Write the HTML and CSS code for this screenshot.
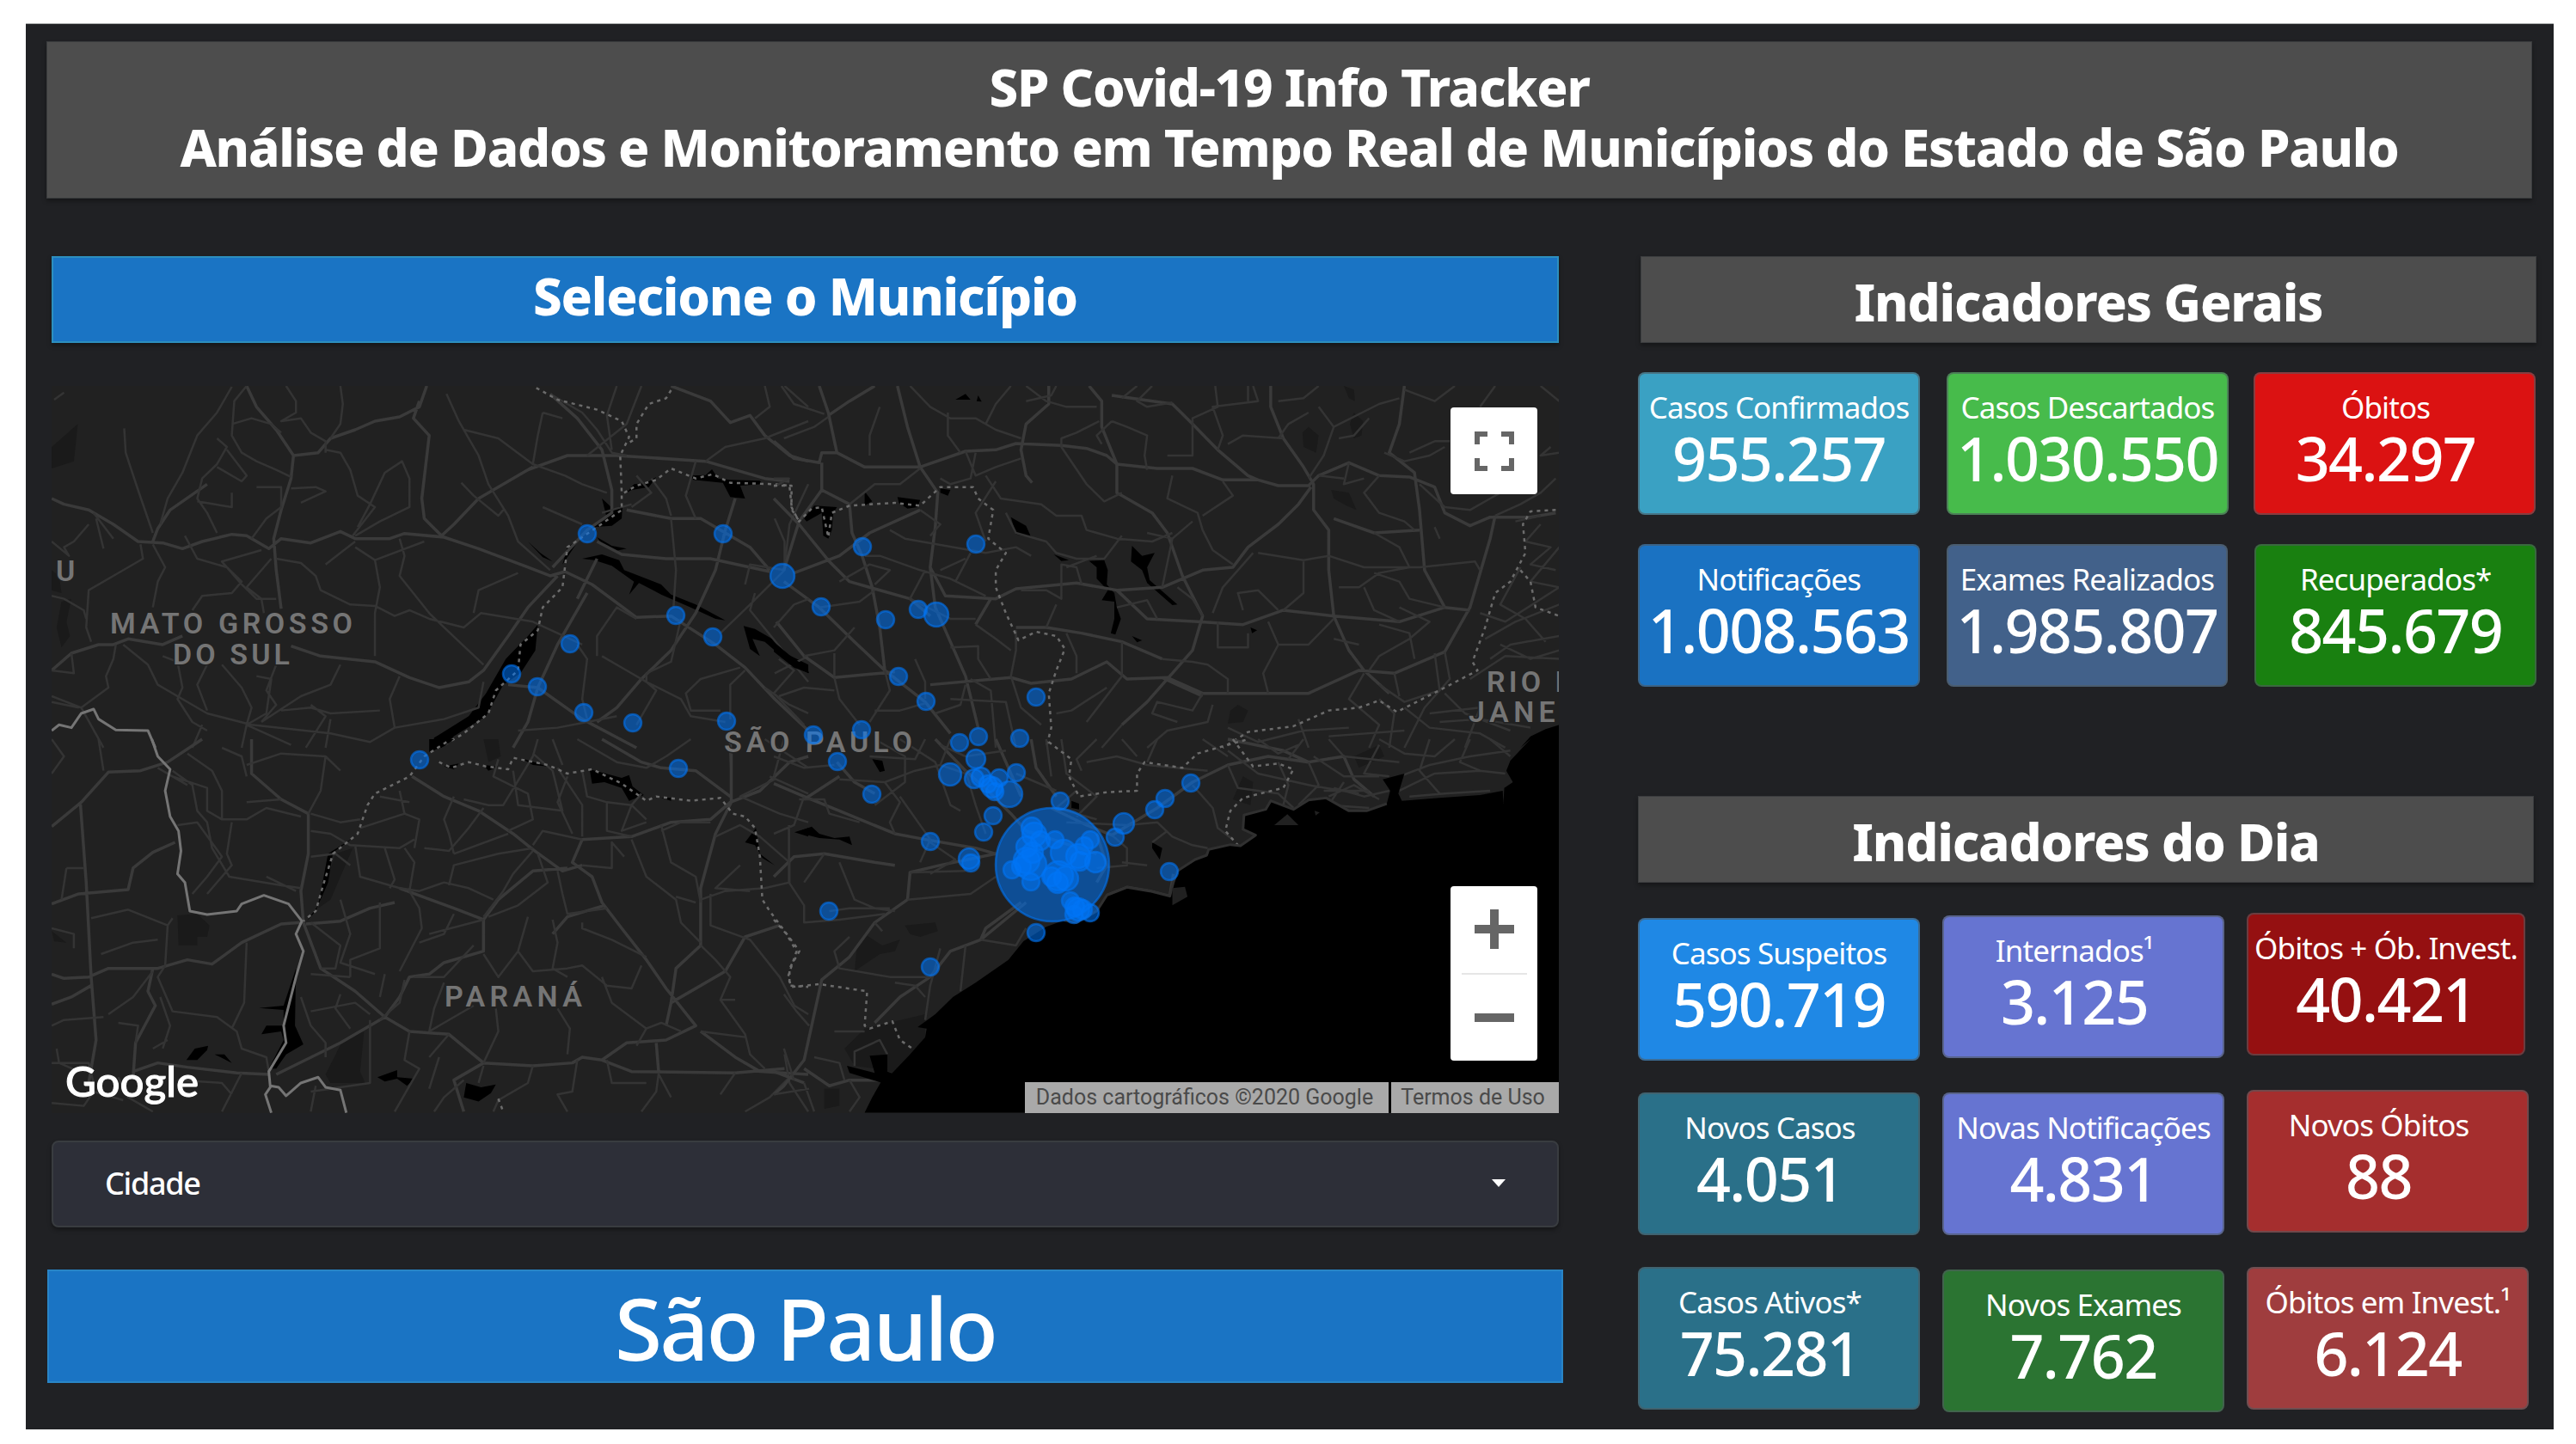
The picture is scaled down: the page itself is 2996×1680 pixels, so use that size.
FILE: index.html
```html
<!DOCTYPE html>
<html lang="pt-BR">
<head>
    <meta charset="UTF-8">
    <meta name="viewport" content="width=device-width, initial-scale=1.0">
    <title>SP Covid-19 Info Tracker</title>
    <link rel="stylesheet" href="styles.css">
</head>
<body>
    <div class="panel">
        <header class="header">
            <h1>SP Covid-19 Info Tracker<br><span class="subtitle">Análise de Dados e Monitoramento em Tempo Real de Municípios do Estado de São Paulo</span></h1>
        </header>
        <main class="content">
            <section class="left">
                <h2 class="bar bar-blue">Selecione o Município</h2>
                <div class="map">
                    <svg class="map-svg" viewBox="0 0 1753 846" preserveAspectRatio="none">
                        <!-- northwest tile -->
                        <g transform="translate(-20 -19) scale(.574 .3333)">
                            <path class="park" d="M88 190L80 320L35 345V270ZM75 800L65 880L72 930L55 970L45 900L55 810ZM35 700L50 720L55 780L35 770Z"/>
                            <path class="water" d="M1150 450L1175 490L1192 470L1190 520L1170 545L1130 550L1160 520ZM1200 430L1215 400L1240 395L1260 375L1245 410L1210 420ZM1330 370L1360 368L1373 348L1385 380L1410 385L1470 388L1475 400L1430 405L1440 450L1410 445L1395 395L1335 385ZM1140 585L1170 615L1200 625L1180 632L1150 610ZM1110 660L1150 645L1185 665L1195 700L1270 750L1290 785L1340 820L1400 875L1380 870L1330 830L1270 785L1225 745L1205 785L1215 740L1170 685L1135 665ZM1437 895L1460 905L1500 945L1510 980L1568 1030V1060L1530 1025L1480 950L1455 940L1470 1000L1450 975ZM1020 890L1015 980L985 1060L950 1100L915 1210L850 1280L825 1320H805L810 1285L880 1210L915 1130L955 1010L1000 930ZM1000 600L1025 640L1050 670L1030 655ZM1080 620L1105 590L1070 680Z"/>
                            <path class="road" d="M35 450L60 470L110 490L160 540L210 600L260 605L300 625L340 600L400 575L430 580L475 625L500 590L560 605L620 565L650 590L720 590L750 572L830 585L900 625L1000 690L1045 720L1075 705M240 600L250 555L275 490L350 400M430 57L450 130L490 210L525 300L520 380L500 490L485 590L490 700L500 835M525 300L575 290L600 240L650 210L690 180L740 165L780 130L795 57M35 1050L75 990L130 960L160 960L190 940L260 960L300 930M520 965L580 1000L690 1020L760 1075L820 1110L880 1090L910 1050L960 930L1000 830L1060 720M1045 85L1100 170L1150 280L1170 420L1170 500L1120 560L1050 690M1075 705L1130 750L1220 865L1290 860L1380 960L1440 1040L1500 1150L1568 1260M1200 490L1290 520L1350 520L1400 570L1450 620L1490 700M1140 600L1190 645L1280 660L1370 660L1490 705M1420 450L1400 560L1380 700L1340 850L1290 980L1230 1080L1180 1180L1140 1230M1290 57L1370 110L1410 185L1450 160L1480 230L1530 300L1568 320M1000 350L1080 300L1180 300L1360 320L1480 380L1530 390M1010 340L900 450L850 540L825 580L790 520L785 450L800 230L768 170L780 110M960 1100L1020 1110L1110 1220L1220 1320M1120 780L1060 960L1020 1110L1000 1230L970 1320M1140 660L1100 800"/>
                            <path class="road minor" d="M182 205L185 290L210 420L240 570M400 60L370 150L330 230L300 360L270 450L255 540M430 57L405 110L400 230L420 290L450 320L490 350L520 375M400 190L440 170L480 190L500 220M510 57L530 110L530 150L500 180L540 170L560 220L590 250L590 290M620 57L625 120L620 190L600 240M590 280L620 290L640 350L655 440L690 480L645 580M655 550L680 470L710 360L745 320L760 380L760 480L700 530L650 580M865 395L890 440L940 510L950 490M835 85L860 180L900 300L920 400L960 510L980 600L1045 700M870 210L940 240L1010 330M1030 150L1020 230L1010 330L1075 370L1110 400L1160 430M1030 480L1110 540M370 240L390 270L370 330L340 380L330 450L350 500L370 570M390 280L430 370L420 390L370 340M450 410L500 410L500 480L470 520L440 590M330 460L400 480L400 430M520 415L570 410L590 425L540 465M125 520L140 625M120 500L160 590M110 540L80 600L60 620L70 650L35 600M215 610L220 660L160 720L110 770L105 900L115 950M240 610L265 690L250 740L240 830M305 580L330 660L390 690L420 740L400 780L340 790L320 840M460 630L380 670L420 750L450 800L490 800M480 660L430 760L460 800L465 850M490 660L540 675L570 720L580 770L640 820L690 825L730 860L760 840L800 870L870 900L905 850L1010 880L1110 960M650 600L620 640L590 680M740 590L750 650L740 720L800 850L830 900L910 1030M650 620L690 665L700 760L690 850L690 1000M690 665L790 600M980 710L900 770L890 850M35 790L60 800L100 840L105 870M75 990L80 1060L35 1050M165 960L160 1010L145 1070L150 1110L95 1180L35 1140M180 960L230 1030L250 1100L320 1170L350 1200L440 1240M260 1000L290 1020L300 1110L290 1150L320 1230L350 1260M350 1030L330 1100L350 1190M380 1030L420 1110L440 1180L430 1240L420 1320M490 1030L470 1120L490 1170L460 1230M450 1070L480 1080L470 1200L430 1240L520 1310M460 1230L540 1140L600 1100L620 1030M440 1240L600 1270L680 1300L730 1250L720 1150L740 1070M730 1250L830 1220L900 1180L910 1090M560 1170L590 1210L550 1320M500 1190L560 1180L600 1200L700 1190M340 1240L320 1320M95 1180L140 1320M35 1160L90 1180M600 1220L590 1320M40 105L60 80M1050 90L1110 150L1140 210L1170 290L1200 300M1180 57L1160 160L1170 280M1030 150L1070 170M1210 470L1150 500M1290 520L1300 700L1295 830M1340 520L1320 440L1340 320M1250 380L1280 450L1290 510M1360 320L1400 270L1480 240L1568 180M1480 57L1490 130L1460 170M1520 57L1568 130M1500 520L1520 600L1520 700M1568 400L1530 540L1520 690M1220 370L1250 430L1210 480M1120 300L1200 190L1230 57M1440 750L1450 680L1520 700L1450 820L1390 920M1460 780L1450 840L1568 1090M1310 870L1290 1020L1240 1060L1240 1090L1310 1150L1330 1210L1400 1230M1430 1040L1350 1080L1320 1130L1330 1190L1390 1190M1440 1050L1410 1100L1410 1220M1100 960L1120 1010L1110 1150L1120 1220M1150 1000L1200 1050L1240 1090L1260 1120L1220 1240M1180 1210L1120 1230L1060 1250L980 1260M1220 870L1180 830L1140 930L1140 1000M1480 1110L1530 1170L1568 1200M1500 1060L1568 1000"/>
                            <path class="state" d="M1017 64L1060 105L1140 140L1190 180L1205 235L1187 300L1190 430L1190 490L1140 550L1080 620L1070 760L1030 830L1020 910L985 960L980 1050L935 1120L920 1200L870 1270L825 1315M1290 72L1280 100L1245 120L1220 190L1220 240L1200 260M1195 430L1220 405L1260 385L1290 345L1340 380L1375 365L1410 395L1500 400L1530 405L1535 490L1550 530"/>
                            <path class="country" d="M35 1260L50 1240L75 1250L95 1200L120 1185L130 1220L165 1258L230 1260L245 1320"/>
                        </g>
                        <!-- northeast tile -->
                        <g transform="translate(840 -19) scale(.5867 .3333)">
                            <path class="park" d="M1130 57L1150 70L1152 110L1140 100ZM1150 150L1168 180L1165 230L1150 240L1142 190ZM1060 200L1080 230L1075 290L1050 270L1048 220ZM1105 420L1140 430L1155 490L1135 475L1110 450ZM920 1170L940 1190L930 1230L900 1235L905 1190Z"/>
                            <path class="water" d="M360 105L380 85L390 105ZM405 90L412 112L402 110ZM180 425L195 460L180 475ZM245 445L290 455L285 480L265 485L248 465ZM330 415L350 420L345 440L330 430ZM60 520L80 475L125 480L118 500L115 560L108 590L98 580L95 500L65 530ZM470 515L500 545L510 585L480 575ZM555 645L585 665L570 668ZM625 668L655 665L662 700L660 750L675 780L680 830L688 870L677 925L668 920L675 870L675 810L650 805L662 770L640 730L640 690ZM710 615L730 650L755 640L740 690L745 735L800 820L790 822L740 745L730 700L708 670ZM0 950L40 1010L65 1035L70 1060L40 1040L0 985ZM710 930L730 945L720 952ZM945 900L958 910L948 920Z"/>
                            <path class="road" d="M0 250L40 310L90 325L95 290L125 290L180 340L290 340L380 285L440 280L480 258L570 265L620 275L660 300L680 330L760 345L830 345L890 385L960 385L1000 405L1060 405L1080 370L1140 325L1200 370L1260 375L1310 410L1330 500L1380 545L1420 515L1500 515L1550 500M90 57L108 150L125 290M200 57L150 110L108 160M245 57L265 200L290 340L325 430L320 550L310 690L320 830L350 950L380 1070L405 1250M95 325L95 420L150 470L155 570L175 650L195 760L210 900L220 1050M0 450L50 540L110 670L150 740L200 765L270 800L310 860M40 710L130 650L190 570L290 490M95 420L50 530L20 700M20 740L90 830L160 950L220 1050L300 1160L350 1270M5 880L60 1000L120 1075L240 1055M625 57L650 110L650 200L680 330L680 430L750 500L780 570L810 720L850 860L830 980L800 1040L740 1160L690 1240M670 90L790 120L830 190L880 280L940 370L960 385M985 57L985 130L1010 240L1050 340L1070 400L1070 490L1100 560L1100 700L1110 860L1140 980L1170 1050L1220 1130M1065 410L1040 470L1000 540L940 620L910 690L850 700L770 760L680 770L600 745L480 765L440 800L340 790L310 690M310 1100L470 1075L510 1095L590 1080L660 1020L700 1080L780 1075L850 1130L1060 1130L1160 1050L1230 1060L1330 985L1380 830L1420 590L1430 510M480 900L540 900L610 920L690 950L770 1010M770 1075L800 1100L850 1140M680 770L740 870L840 880L930 890L1010 840L1110 860L1240 880L1330 830L1380 840M1250 57L1240 190L1220 290L1270 360L1280 490L1290 700L1330 830M545 57L545 120L500 190L490 280L500 370L512 395M430 800L400 890M1110 520L1190 570L1280 560"/>
                            <path class="road minor" d="M15 57L40 120L100 155M20 240L80 200L108 165M210 130L190 230L190 300M270 57L310 130L350 170L400 170L440 210L490 240M470 57L440 120L420 190M345 150L345 230L370 290M500 57L540 110L580 130L640 130M500 110L550 90L560 57M645 180L600 220L570 240L570 270L620 400L655 460L690 430M670 180L700 200L740 230L735 300L740 350M670 180L640 230L650 260M720 57L690 100M750 57L720 110L740 130L790 115M875 57L880 130L830 170L830 300L780 300M950 57L960 110L870 130L890 230L880 280M1010 240L930 230L900 260M1000 110L1050 100L1080 57M1080 130L1110 200L1090 300L1060 380M1060 150L1020 190L1000 240M1250 70L1310 110L1350 57M1430 57L1400 130M1110 200L1200 120L1240 100M1120 240L1150 230L1180 170M1140 325L1130 400L1170 380M1080 370L1130 380M1200 370L1170 430L1200 500L1250 530L1270 560M1260 290L1310 250L1340 250M1210 290L1250 320L1300 300L1330 270M1280 400L1330 480L1380 490L1420 450L1440 430M1310 550L1320 590M1430 510L1480 470L1520 430L1550 380M1470 530L1520 510M0 410L30 380L0 380M150 470L200 400L250 400L290 345M330 380L350 400L390 380L400 290M290 490L330 540L310 580M230 560L260 590L420 640L480 620L510 650M460 500L480 570L540 600L560 640L600 660L655 660L690 580M420 370L450 450L530 470L560 510L610 510L620 560L680 590L750 600L790 570M380 285L400 370L440 340L490 310M440 390L400 500L420 600M490 770L540 770L570 800L570 680L600 690L610 750M680 830L740 805L760 870M540 900L560 820M400 890L440 940L470 980M350 970L405 965L405 1010L430 1080M180 650L210 650L290 700L350 730L420 790M130 740L190 680L230 700L200 750M390 640L360 740M380 660L330 700M90 830L170 810L200 770M160 900L120 980L60 1000M120 990L120 1070M0 900L40 820L70 800M300 700L270 800L350 870L400 870M10 1140L60 1110L120 1120M10 1010L40 1050L0 1130M120 1075L130 1150L170 1240M220 1050L230 1120L190 1230M280 1010L300 1090L300 1150M380 1100L370 1170L320 1200M350 1150L460 1160L480 1320M390 1080L430 1120L440 1320M0 1130L60 1240M200 1190L250 1190L300 1165M480 910L480 980L470 1070L490 1180L530 1240M580 920L600 1000L600 1060M690 950L690 1070L620 1230M660 1110L590 1190L560 1200M880 880L880 970L940 970L940 920M770 1010L830 1020L860 1030L900 1080L900 1130M850 860L830 800L800 760M770 760L790 590L740 570M830 530L790 590M850 510L910 440L890 390M790 370L780 450L840 500L850 560L870 630L910 680M960 640L1050 665L1100 650L1170 690L1280 690M1050 670L1050 780L1010 840M950 640L920 700L890 760L870 850M1190 570L1240 620L1260 690L1200 710L1160 760L1120 760M1280 690L1390 670L1400 700M1190 710L1240 740L1260 800L1330 830M1170 760L1190 840L1240 880M1240 830L1300 880L1260 940L1200 1000L1180 1050M1200 890L1260 920L1270 1010M1110 940L1160 960M1000 840L960 770L920 780L930 840M980 880L1000 960L1060 960L1110 870M1000 960L970 1060L980 1130M870 1170L860 1230L780 1260L740 1320M850 1130L830 1190L760 1160L750 1200L800 1230M690 1240L650 1320M1170 1060L1140 1150L1200 1240L1180 1320M1200 1100L1250 1160L1320 1120L1310 990M1230 1060L1240 1140M1330 985L1340 1080L1290 1180L1250 1320M1400 850L1450 880L1557 760M1410 940L1470 880L1500 860L1557 820M1440 960L1500 1010L1557 980M1480 690L1440 820L1490 870L1530 950M1520 540L1490 600L1540 620L1500 680L1550 700M1557 620L1500 740L1557 760M1420 1010L1460 960L1557 930M1380 1080L1450 1000L1557 1010M1300 1200L1400 1180L1370 1320M1250 1180L1300 1250L1400 1270L1450 1320M900 1250L960 1300L1050 1260L1140 1250M1100 1280L1250 1260M1040 1220L1060 1320M1200 1150L1230 1200L1220 1320M1330 1130L1370 1200L1460 1260M1500 1250L1400 1220L1320 1230M580 690L640 650M940 110L940 57M1520 57L1557 110M1557 290L1520 300L1540 270"/>
                            <path class="state" d="M0 405L35 405L35 480L50 530L75 485L95 480L108 585L115 500L150 475L240 465L290 475L330 410L395 410L405 450L435 490L425 590L460 640L440 700L440 760L460 850L485 945L520 915L560 930L577 975L560 1050L545 1130L550 1250L540 1320M1550 490L1500 495L1485 540L1490 640L1460 740L1430 780L1410 900L1385 1020L1395 1050L1330 1110L1235 1195L1200 1155L1160 1180L1100 1190L1030 1245L940 1265L890 1320M1480 700L1500 740L1510 830L1557 860"/>
                        </g>
                        <!-- southwest tile -->
                        <g transform="translate(-20 411) scale(.574 .3333)">
                            <path class="park" d="M290 615L330 610L355 650L350 690L330 690L330 720L292 720ZM590 1170L625 1050L668 1020L660 1160L670 1200L600 1200ZM610 400L645 380L600 560L575 590ZM35 670L65 710L40 705ZM910 0H940L945 60L920 80Z"/>
                            <path class="water" d="M800 0H850L830 25L800 45ZM830 95L860 85L850 105ZM910 90L940 95L920 110ZM985 65L1040 95L1010 90ZM1125 105L1190 135L1205 125L1212 165L1235 195L1205 215L1190 170L1155 150L1130 155ZM1270 205L1290 205V215ZM1440 360L1462 310L1470 400L1500 440L1475 415L1460 370ZM1540 325L1568 310V340ZM650 340L605 395L595 500L570 600L552 635L575 580L595 400ZM530 800L528 1000L545 1065L510 1100L490 1150H475L505 1050L500 1020L460 1030L470 1000L505 1000L505 945L455 938L505 930ZM308 1120L325 1080L352 1070L350 1085L330 1120ZM365 1100L385 1100L400 1130ZM695 1180L735 1155L735 1180L770 1185L755 1210L735 1185L710 1195ZM875 1200L905 1215L935 1205L925 1235L900 1265L870 1250Z"/>
                            <path class="road" d="M35 305L95 220L150 115L215 110L270 80L340 0M35 575L90 540L190 525L200 450L240 395L285 360M93 220L105 500L115 830L125 1050L110 1200M35 820L60 835L110 830L150 800L250 800L310 770L360 785L420 710L500 645L540 640M550 645L620 635L680 590L730 570M765 130L830 200L900 250L970 330L1010 385L1070 460L1110 440M440 0L440 120L500 210L555 260L555 400L540 530L545 640L580 800L650 880L710 970L760 1020L840 1030L910 1130L1010 1140L1090 1130L1110 1110L1150 1120L1200 1060L1280 1050L1340 1000L1280 870L1240 770L1190 660L1150 570L1130 480L1090 430L1110 350L1210 340L1290 290L1370 280L1410 220L1470 180L1530 80L1568 60M1150 0L1230 80L1270 100L1340 110L1410 200M1412 50V220L1380 330L1350 520L1350 720L1300 800L1290 920L1280 1000M740 520L850 590L910 630L910 740L830 780L800 820L760 830L740 900L710 970L620 1060L490 1170M910 630L940 560L1010 460L1080 450M240 800L230 880L245 930L205 1060L200 1180M35 925L75 900L115 860M200 1160L250 1130L310 1145L410 1165L475 1170M1350 1020L1420 1110L1470 1160L1568 1170M1150 1120L1210 1160L1420 1165L1520 1150M1265 1165L1260 1060M910 1130L850 1190L870 1300M1510 650L1440 690L1400 810L1290 920M1155 580L1080 620L1050 680M1410 0L1412 100"/>
                            <path class="road minor" d="M130 0L140 110M35 0L60 60L35 120M280 110L320 160L330 250L350 290L360 380L395 480L500 510L540 520M280 130L350 170L350 250L380 280L430 280L470 240L540 270M310 50L360 110L380 180L380 280M380 30L420 60L430 130M430 90L500 50L590 60L620 110M590 60L580 180L555 260M320 540L350 480L380 410L330 290L290 300M400 290L390 400L400 440L350 540M470 480L530 530M560 260L620 290L660 280M560 320L600 330L640 370L740 380L770 350M65 450L100 450M65 450L55 560M115 625L190 595L270 650L280 625M135 750L200 710L250 700M270 650L265 790L250 830L280 950L370 970L410 1020L420 1080L470 1110L475 1160M430 710L425 920L400 1010M35 660L80 680L80 730M150 960L200 900L240 810M140 970L60 980L35 1000M170 990L210 1000L205 1060M255 900L275 1000L260 1080M45 1080L50 1130L90 1160M35 1130L110 1130L120 1200M240 1080L270 1050M560 410L610 400L640 440M650 370L660 480L740 520L780 530L830 500L880 520L930 560M710 380L730 490L720 520M750 380L770 430L760 530L780 590L785 660L740 810M700 570L700 730L640 770L640 830M620 560L640 680L620 780L690 820M560 820L640 830M560 640L620 720L610 800L580 800M560 950L650 920L680 960M540 900L560 1000L590 1060L590 1110M620 890L610 940L640 1010M710 820L700 900M680 980L680 1200L560 1230M760 1020L750 1120L780 1150L730 1300M800 1020L810 940L830 850M840 1030L800 1110M910 1140L900 1200M870 1190L830 1250L810 1300M1010 1140L1000 1200L940 1260L930 1300M1100 1120L1090 1230L1060 1240L1080 1300M850 200L830 280L840 330L850 400M850 400L960 330M910 240L880 310L840 390L790 380M740 180L750 260L780 280L770 380M660 310L750 260M700 200L760 220M870 210L920 230L950 230L1010 60L1020 0M940 70L930 130L1000 190L1010 280L960 320M970 110L980 230L1070 250L1050 110L1010 50M1060 100L1110 230L1110 340M1080 130L1060 220L1090 330M1110 110L1120 200L1160 220L1160 320L1210 340M1160 220L1210 230L1240 280M1230 190L1210 230L1190 320L1240 290M1010 380L940 400L850 440L840 510M1010 390L970 470L950 530L910 620M1020 400L1040 500L980 580L920 620M1060 460L1070 540L1080 610L1160 590M1110 440L1170 450L1170 360L1195 410M1110 350L1030 320L1010 370M1210 350L1240 480L1300 560L1310 640L1350 710M1270 300L1290 430L1340 480L1350 570M1370 290L1310 290L1270 320M1380 340L1430 300L1470 340L1530 430L1530 500L1480 520L1400 530L1350 560M1430 440L1380 520L1450 530M1300 550L1340 570M1370 540L1370 650L1450 700L1510 830L1540 930L1568 960M1110 640L1110 660L1170 700L1240 760M1350 720L1380 770L1410 830L1390 910L1440 1030L1450 1100L1480 1150M1390 910L1420 910M1240 1010L1270 990L1310 1020M1350 1020L1440 1040M1240 1010L1220 1070M1050 630L1060 710L1050 800L1080 830M1000 620L980 740L940 830L910 750M980 740L1010 810L1080 800L1110 790L1160 860L1210 870L1230 790M1150 830L1170 920L1240 1010M935 940L940 1020L910 1130M800 1020L890 930M1060 940L1085 1010L1080 1100M700 980L740 920L750 840M820 1110L800 1220M770 830L830 830L890 720M910 630L800 680M850 610L830 680L780 710M1265 1165L1260 1230L1230 1300M1265 1170L1290 1250M1160 1120L1170 1200L1240 1200M1420 1165L1390 1240M1520 1100L1530 1200L1568 1300M1440 1300L1490 1250L1530 1180M420 1165L380 1300M290 1190L380 1200L400 1240M170 1180L190 1250L240 1300M35 1270L100 1280L120 1230L180 1260M570 1210L560 1300M500 210L430 220M250 100L310 160M1490 130L1568 190M1500 140L1430 200L1510 260L1568 290M1480 0L1568 100M1050 0L1070 90M1100 0L1180 80L1240 100L1280 60L1330 0"/>
                            <path class="state" d="M835 10L790 60L760 130L690 190L675 230L655 330L605 400L585 510L570 600L545 635M820 80L845 100L880 80L915 95L960 105L970 65L1040 90L1080 120L1130 105L1190 155L1240 215L1260 200L1330 215L1390 205L1415 260L1440 270L1460 310L1470 410L1475 560L1490 600L1520 670L1550 740L1530 800L1530 860L1568 865M940 1255L950 1300"/>
                            <path class="country" d="M238 0L250 60L275 105L265 180L275 270L292 320L297 390L290 470L305 500L315 600L350 612L410 600L420 575L465 545L515 575L542 635L530 680L545 740L530 830L505 1000L510 1060L475 1160L478 1215L468 1240L480 1304M478 1210L495 1215L510 1245L540 1200L575 1180L590 1215L620 1225L632 1304"/>
                        </g>
                        <!-- southeast tile -->
                        <g transform="translate(840 411) scale(.5867 .3333)">
                            <path class="park" d="M180 680L215 720L250 700L240 740L210 750L160 810L165 720ZM260 650L320 640L325 670L290 690L270 680ZM140 1080L180 1010L300 960V1040L240 1165L200 1150L160 1140ZM930 130L950 150L945 230L910 210ZM1150 60L1200 20L1210 60L1160 100ZM100 1220L130 1220V1280L100 1290Z"/>
                            <path class="water" d="M45 325L75 305L90 330L120 345L150 340L155 370L130 350L90 345ZM195 70L215 75L220 110L210 115ZM590 215L605 225V245L590 240ZM750 360L770 380L765 420L750 380Z"/>
                            <path class="road" d="M0 155L60 200L130 250L240 330L300 350L400 380L440 400M0 480L40 410L100 400L200 430L240 440M130 130L60 210M320 0L380 110L430 190L470 260L500 320L640 400M125 80L160 150L200 190M440 400L330 440L270 465L265 560L200 640L150 760L95 840L75 1000L60 1120L20 1210L0 1240M500 570L410 700L350 740L310 830L250 900L200 990M410 700L420 660L490 570M550 240L620 300L670 335L760 240L830 150L900 90L980 60L1060 80M510 0L520 100L560 200M440 0L490 200M660 545L700 517L745 530L785 548L792 470M640 500L660 440L640 330M60 1150L110 1210L150 1190L210 1190M0 1160L60 1200M1060 80L1130 60L1150 140L1190 200M1060 80L1010 40L900 0"/>
                            <path class="road minor" d="M0 60L60 100L120 90M20 0L0 130M60 200L40 300L0 330M50 210L100 210L110 260L170 290M130 140L220 150L250 220L230 290L240 330M220 150L280 110L330 90M250 200L310 350L290 430M30 300L30 500L60 580L60 640L130 630L220 610M130 430L160 560L200 590L240 600M100 400L60 500M310 360L360 420L310 470M265 560L390 540L440 480M270 465L380 460M230 590L150 590L110 600M200 640L215 670M150 690L120 740L130 800L230 830L310 830M330 730L310 860L300 980M380 720L370 880M410 700L480 720L500 660M240 850L280 860L300 900M20 890L45 950L70 1000M120 1020L180 1020M80 1110L130 1130L140 1190M20 1080L40 1190M60 1200L80 1300M150 1190L170 1250L150 1300M0 1240L70 1220M160 1140L160 1090L210 1050L225 1100M350 0L330 90L380 120M380 110L400 230L420 330M480 120L560 180M540 0L550 130M570 0L580 120L640 200L600 270M620 80L680 60L740 90L860 110M600 180L560 240L640 280M580 290L700 300M670 335L700 380L700 440L640 450M690 430L740 440M700 300L760 290L790 340L830 370L860 380M780 320L750 360M830 160L870 240L880 310L910 350M900 90L920 170L1000 190L1030 240M900 40L960 120L1060 160L1160 190M1000 80L1020 160L1010 230M1060 80L1080 160L1040 230M1070 60L1130 130L1200 130M1100 200L1150 160L1200 210M1110 170L1170 200L1220 180M1090 180L1180 180M1130 150L1100 230L1180 240M1200 20L1170 120L1220 130M1240 130L1300 90L1380 60L1460 40M1240 180L1310 120L1400 110L1450 120M1260 200L1330 190L1420 180M1300 0L1280 110L1320 190M1380 0L1360 80L1400 110M1420 0L1460 60M1200 0L1250 50L1310 60L1350 0M1100 0L1130 60L1240 80M1050 0L1020 70M850 0L900 60M760 0L740 80M690 0L720 60M640 0L600 70L610 110M960 0L1000 50L1040 20M460 40L380 60L330 20M250 0L320 80L350 230L370 250M300 0L280 70L190 60M200 0L260 60L260 150L200 230"/>
                            <path class="state" d="M545 10L590 70L585 130L605 200L660 185L720 180L720 120L735 80L810 100L840 50L940 0M910 0L950 95L1000 85L1030 105L1010 170L930 205L905 250L895 320L920 370M0 630L25 680L45 740L28 830L35 865L90 855L185 880L180 1000L190 1010L235 985L250 1050L275 1080"/>
                            <path class="sea" d="M180 1304L195 1250L213 1195L235 1165L270 1100L300 1040L303 1010L285 1005L320 960L355 900L400 850L465 770L495 705L540 655L575 632L600 640L640 600L660 545L700 517L745 530L785 548L792 500L800 460L835 420L858 405L862 385L905 368L925 372L955 335L930 315L932 265L975 245L985 215L1030 245L1060 212L1095 205L1140 250L1175 250L1215 225L1222 180L1207 140L1250 120L1238 190L1245 215L1320 205L1400 195L1445 180L1446 225L1448 170L1465 150L1452 110L1460 75L1500 0L1480 30L1500 -10L1530 -35L1557 -50V1304Z"/>
                            <path class="coast" d="M575 632L600 640L640 600L660 545L700 517L745 530L785 548L792 500L800 460L835 420L858 405L862 385L905 368L925 372L955 335L930 315L932 265L975 245L985 215L1030 245L1060 212L1095 205L1140 250L1175 250L1215 225"/>
                            <path class="island" d="M790 520L815 515L820 550L790 580ZM1018 262L1040 300L992 300ZM1072 250L1082 256L1074 266Z"/>
                            <path class="water" d="M145 1140L200 1165L190 1105L225 1100L225 1160L240 1170L215 1200L150 1165Z"/>
                        </g>
                        <g class="map-labels">
                            <text x="5" y="227">U</text>
                            <text x="68" y="288" textLength="282">MATO GROSSO</text>
                            <text x="141" y="324" textLength="136">DO SUL</text>
                            <text x="782" y="426" textLength="219">SÃO PAULO</text>
                            <text x="457" y="722" textLength="160">PARANÁ</text>
                            <text x="1669" y="356" textLength="102">RIO D</text>
                            <text x="1648" y="391" textLength="116">JANEI</text>
                        </g>
                        <g class="dots">
                            <circle cx="623" cy="172" r="10"/>
                            <circle cx="781" cy="172" r="10"/>
                            <circle cx="850" cy="221" r="14"/>
                            <circle cx="726" cy="267" r="10"/>
                            <circle cx="769" cy="292" r="10"/>
                            <circle cx="603" cy="300" r="10"/>
                            <circle cx="535" cy="335" r="10"/>
                            <circle cx="565" cy="350" r="10"/>
                            <circle cx="619" cy="380" r="10"/>
                            <circle cx="676" cy="392" r="10"/>
                            <circle cx="785" cy="390" r="10"/>
                            <circle cx="943" cy="187" r="10"/>
                            <circle cx="1075" cy="184" r="10"/>
                            <circle cx="895" cy="257" r="10"/>
                            <circle cx="970" cy="272" r="10"/>
                            <circle cx="1008" cy="260" r="10"/>
                            <circle cx="1029" cy="266" r="14"/>
                            <circle cx="985" cy="338" r="10"/>
                            <circle cx="1017" cy="367" r="10"/>
                            <circle cx="1145" cy="362" r="10"/>
                            <circle cx="886" cy="406" r="10"/>
                            <circle cx="942" cy="400" r="10"/>
                            <circle cx="1056" cy="415" r="10"/>
                            <circle cx="1078" cy="408" r="10"/>
                            <circle cx="1126" cy="410" r="10"/>
                            <circle cx="428" cy="435" r="10"/>
                            <circle cx="729" cy="445" r="10"/>
                            <circle cx="914" cy="437" r="10"/>
                            <circle cx="954" cy="475" r="10"/>
                            <circle cx="1075" cy="434" r="11"/>
                            <circle cx="1045" cy="452" r="13"/>
                            <circle cx="1122" cy="450" r="10"/>
                            <circle cx="1102" cy="456" r="10"/>
                            <circle cx="1073" cy="457" r="11"/>
                            <circle cx="1081" cy="455" r="11"/>
                            <circle cx="1089" cy="463" r="10"/>
                            <circle cx="1094" cy="467" r="12"/>
                            <circle cx="1097" cy="472" r="10"/>
                            <circle cx="1114" cy="475" r="15"/>
                            <circle cx="1173" cy="483" r="10"/>
                            <circle cx="1095" cy="500" r="10"/>
                            <circle cx="1084" cy="519" r="10"/>
                            <circle cx="1022" cy="530" r="10"/>
                            <circle cx="1067" cy="550" r="12"/>
                            <circle cx="1069" cy="555" r="10"/>
                            <circle cx="1325" cy="462" r="10"/>
                            <circle cx="1295" cy="480" r="10"/>
                            <circle cx="1283" cy="493" r="10"/>
                            <circle cx="1247" cy="509" r="12"/>
                            <circle cx="1237" cy="525" r="10"/>
                            <circle cx="1300" cy="565" r="10"/>
                            <circle cx="904" cy="611" r="10"/>
                            <circle cx="1022" cy="676" r="10"/>
                            <circle cx="1145" cy="636" r="10"/>
                            <!-- Grande São Paulo -->
                            <circle cx="1164" cy="557" r="66"/>
                            <circle cx="1140" cy="514" r="12"/>
                            <circle cx="1143" cy="522" r="14"/>
                            <circle cx="1150" cy="529" r="11"/>
                            <circle cx="1167" cy="528" r="10"/>
                            <circle cx="1208" cy="528" r="10"/>
                            <circle cx="1201" cy="535" r="10"/>
                            <circle cx="1134" cy="536" r="12"/>
                            <circle cx="1141" cy="543" r="12"/>
                            <circle cx="1177" cy="543" r="15"/>
                            <circle cx="1194" cy="547" r="14"/>
                            <circle cx="1196" cy="553" r="11"/>
                            <circle cx="1214" cy="554" r="12"/>
                            <circle cx="1134" cy="552" r="15"/>
                            <circle cx="1139" cy="557" r="18"/>
                            <circle cx="1128" cy="559" r="11"/>
                            <circle cx="1117" cy="563" r="10"/>
                            <circle cx="1139" cy="577" r="10"/>
                            <circle cx="1171" cy="570" r="17"/>
                            <circle cx="1180" cy="573" r="14"/>
                            <circle cx="1170" cy="578" r="12"/>
                            <circle cx="1163" cy="571" r="11"/>
                            <circle cx="1185" cy="599" r="10"/>
                            <circle cx="1190" cy="606" r="11"/>
                            <circle cx="1194" cy="609" r="13"/>
                            <circle cx="1189" cy="615" r="10"/>
                            <circle cx="1199" cy="609" r="11"/>
                            <circle cx="1208" cy="613" r="10"/>
                        </g>
                        <text class="google" x="16" y="827" textLength="155" lengthAdjust="spacingAndGlyphs">Google</text>
                    </svg>
                    <button class="map-btn fullscreen">
                        <svg width="46" height="46" viewBox="0 0 46 46"><path d="M3 15V3H15M31 3H43V15M43 31V43H31M15 43H3V31"/></svg>
                    </button>
                    <div class="map-btn zoom">
                        <svg width="46" height="46" viewBox="0 0 46 46"><path class="thick" d="M0 23H46M23 0V46"/></svg>
                        <span class="zoom-line"></span>
                        <svg width="46" height="46" viewBox="0 0 46 46"><path class="thick" d="M0 23H46"/></svg>
                    </div>
                    <div class="attribution">
                        <span class="map-data">Dados cartográficos ©2020 Google</span>
                        <span class="terms">Termos de Uso</span>
                    </div>
                </div>
                <div class="select">
                    <span>Cidade</span>
                    <span class="arrow"></span>
                </div>
                <div class="city">São Paulo</div>
            </section>
            <section class="right">
                <h2 class="bar bar-gray bar-gerais">Indicadores Gerais</h2>
                <div class="row">
                    <div class="card confirmados"><p>Casos Confirmados</p><strong>955.257</strong></div>
                    <div class="card descartados"><p>Casos Descartados</p><strong>1.030.550</strong></div>
                    <div class="card obitos shift"><p>Óbitos</p><strong>34.297</strong></div>
                </div>
                <div class="row">
                    <div class="card notificacoes"><p>Notificações</p><strong>1.008.563</strong></div>
                    <div class="card exames"><p>Exames Realizados</p><strong>1.985.807</strong></div>
                    <div class="card recuperados"><p>Recuperados*</p><strong>845.679</strong></div>
                </div>
                <h2 class="bar bar-gray bar-dia">Indicadores do Dia</h2>
                <div class="row row-dia row-first">
                    <div class="card suspeitos"><p>Casos Suspeitos</p><strong>590.719</strong></div>
                    <div class="card roxo up-small shift"><p>Internados¹</p><strong>3.125</strong></div>
                    <div class="card investigados up"><p>Óbitos + Ób. Invest.</p><strong>40.421</strong></div>
                </div>
                <div class="row row-dia">
                    <div class="card casos shift"><p>Novos Casos</p><strong>4.051</strong></div>
                    <div class="card roxo"><p>Novas Notificações</p><strong>4.831</strong></div>
                    <div class="card novos-obitos up-small shift"><p>Novos Óbitos</p><strong>88</strong></div>
                </div>
                <div class="row row-dia">
                    <div class="card casos shift"><p>Casos Ativos*</p><strong>75.281</strong></div>
                    <div class="card novos-exames down"><p>Novos Exames</p><strong>7.762</strong></div>
                    <div class="card em-invest"><p>Óbitos em Invest.¹</p><strong>6.124</strong></div>
                </div>
            </section>
        </main>
    </div>
</body>
</html>
```
FILE: styles.css
```css
* {
    margin: 0;
    padding: 0;
    box-sizing: border-box;
}

body {
    background-color: #fff;
    color: white;
    font-family: "Noto Sans", "Open Sans", sans-serif;
}

.panel {
    width: 2940px;
    height: 1636px;
    margin: 27px 0 0 30px;
    padding-top: 20px;
    background-color: #202124;
    border-top: 1px solid #a9abab;
}

.header {
    width: 2891px;
    height: 183px;
    margin-left: 24px;
    padding-top: 17px;
    background-color: #4d4d4d;
    border: 1px solid #3b3d3f;
    box-shadow: 0 3px 5px rgba(0, 0, 0, 0.35);
    text-align: center;
}

.header h1 {
    font-size: 60px;
    font-weight: 800;
    letter-spacing: -1.28px;
    line-height: 70px;
    white-space: nowrap;
}

.content {
    display: flex;
    margin: 67px 0 0 30px;
}

.left {
    width: 1753px;
}

.right {
    width: 1045px;
    margin-left: 92px;
}

.bar {
    height: 101px;
    font-size: 60px;
    font-weight: 800;
    letter-spacing: -1.2px;
    text-align: center;
    white-space: nowrap;
    box-shadow: 0 3px 5px rgba(0, 0, 0, 0.35);
}

.bar-blue {
    line-height: 89px;
    background-color: #1a74c4;
    border: 2px solid #2d8fbe;
}

.bar-gray {
    background-color: #4d4d4d;
    border: 1px solid #3b3d3f;
}

.bar-gerais {
    width: 1042px;
    margin-left: 3px;
    line-height: 105px;
}

.bar-dia {
    width: 1042px;
    margin-top: 127px;
    line-height: 104px;
}

/* Mapa */
.map {
    position: relative;
    width: 1753px;
    height: 846px;
    margin-top: 50px;
    background-color: #212121;
    overflow: hidden;
}

.map-svg {
    display: block;
    width: 1753px;
    height: 846px;
}

.map-svg path {
    vector-effect: non-scaling-stroke;
    stroke-linejoin: round;
}

.park {
    fill: #1a1a1a;
}

.water,
.sea {
    fill: #000;
}

.island {
    fill: #212121;
}

.road {
    fill: none;
    stroke: #3a3a3a;
    stroke-width: 3.5;
}

.minor {
    stroke: #343434;
    stroke-width: 2.5;
}

.coast {
    fill: none;
    stroke: #303030;
    stroke-width: 3;
}

.state {
    fill: none;
    stroke: #6b6b6b;
    stroke-width: 2.5;
    stroke-dasharray: 4 5;
}

.country {
    fill: none;
    stroke: #757575;
    stroke-width: 3;
}

.map-labels {
    fill: #757575;
    stroke: #212121;
    stroke-width: 3;
    paint-order: stroke;
    font-family: Roboto, sans-serif;
    font-size: 34px;
    font-weight: 600;
}

.dots circle {
    fill: rgba(0, 117, 245, 0.55);
    stroke: rgba(0, 117, 245, 0.6);
    stroke-width: 2.5;
}

.google {
    fill: white;
    font-family: Lato, sans-serif;
    font-size: 49px;
    font-weight: 500;
    stroke: white;
    stroke-width: 1;
}

.map-btn {
    position: absolute;
    right: 25px;
    width: 101px;
    display: flex;
    flex-direction: column;
    align-items: center;
    background-color: white;
    border: none;
    border-radius: 4px;
}

.map-btn path {
    fill: none;
    stroke: #666;
    stroke-width: 6;
}

.map-btn .thick {
    stroke-width: 10;
}

.fullscreen {
    top: 25px;
    height: 101px;
    justify-content: center;
}

.zoom {
    top: 582px;
    height: 203px;
    padding: 27px 0;
    justify-content: space-between;
}

.zoom-line {
    width: 76px;
    height: 2px;
    background-color: #e6e6e6;
}

.attribution {
    position: absolute;
    right: 0;
    bottom: 0;
    display: flex;
    gap: 3px;
    font-family: Roboto, sans-serif;
    font-size: 25px;
    line-height: 36px;
    color: #4a4a4a;
    text-align: center;
    white-space: nowrap;
}

.attribution span {
    padding-right: 5px;
    background-color: #a9a9a9;
}

.map-data {
    width: 423px;
}

.terms {
    width: 195px;
}

.select {
    display: flex;
    align-items: center;
    justify-content: space-between;
    height: 101px;
    margin-top: 32px;
    padding: 0 60px 2px;
    background-color: #2d2f38;
    border: 2px solid #393c40;
    border-radius: 8px;
    box-shadow: 0 3px 5px rgba(0, 0, 0, 0.35);
    font-size: 36px;
    font-weight: 500;
    letter-spacing: -1.3px;
}

.arrow {
    border: 8px solid transparent;
    border-top: 9px solid white;
    border-bottom: none;
}

.city {
    height: 132px;
    margin: 49px -5px 0;
    background-color: #1a74c4;
    border: 2px solid #2985c6;
    font-size: 100px;
    font-weight: 500;
    letter-spacing: -2.8px;
    line-height: 131px;
    text-align: center;
}

/* Indicadores */
.row {
    display: flex;
    gap: 31px;
    margin-top: 34px;
}

.row-dia {
    gap: 26px;
    margin-top: 37px;
}

.row-first {
    margin-top: 41px;
}

.card {
    width: 328px;
    height: 166px;
    padding-top: 15px;
    border: 2px solid rgba(80, 90, 95, 0.6);
    border-radius: 8px;
    text-align: center;
    white-space: nowrap;
}

.card p {
    font-size: 35px;
    font-weight: 450;
    letter-spacing: -0.9px;
    line-height: 48px;
}

.card strong {
    display: block;
    font-size: 70px;
    font-weight: 500;
    letter-spacing: -1.6px;
    line-height: 70px;
}

.shift {
    padding-right: 21px;
}

.up {
    margin-top: -6px;
    margin-bottom: 6px;
}

.up-small {
    margin-top: -3px;
    margin-bottom: 3px;
}

.down {
    margin-top: 3px;
    margin-bottom: -3px;
}

.confirmados { background-color: #3aa1c3; }
.descartados { background-color: #47bb4b; }
.obitos { background-color: #db1212; margin-left: -2px; }
.notificacoes { background-color: #1a72c2; }
.exames { background-color: #42618a; }
.recuperados { background-color: #198010; }
.suspeitos { background-color: #1f88e5; }
.roxo { background-color: #6674d1; }
.investigados { background-color: #951011; width: 324px; }
.casos { background-color: #2a7089; }
.novos-obitos { background-color: #a52e2e; }
.novos-exames { background-color: #2b7432; }
.em-invest { background-color: #9f3d3e; }
```
